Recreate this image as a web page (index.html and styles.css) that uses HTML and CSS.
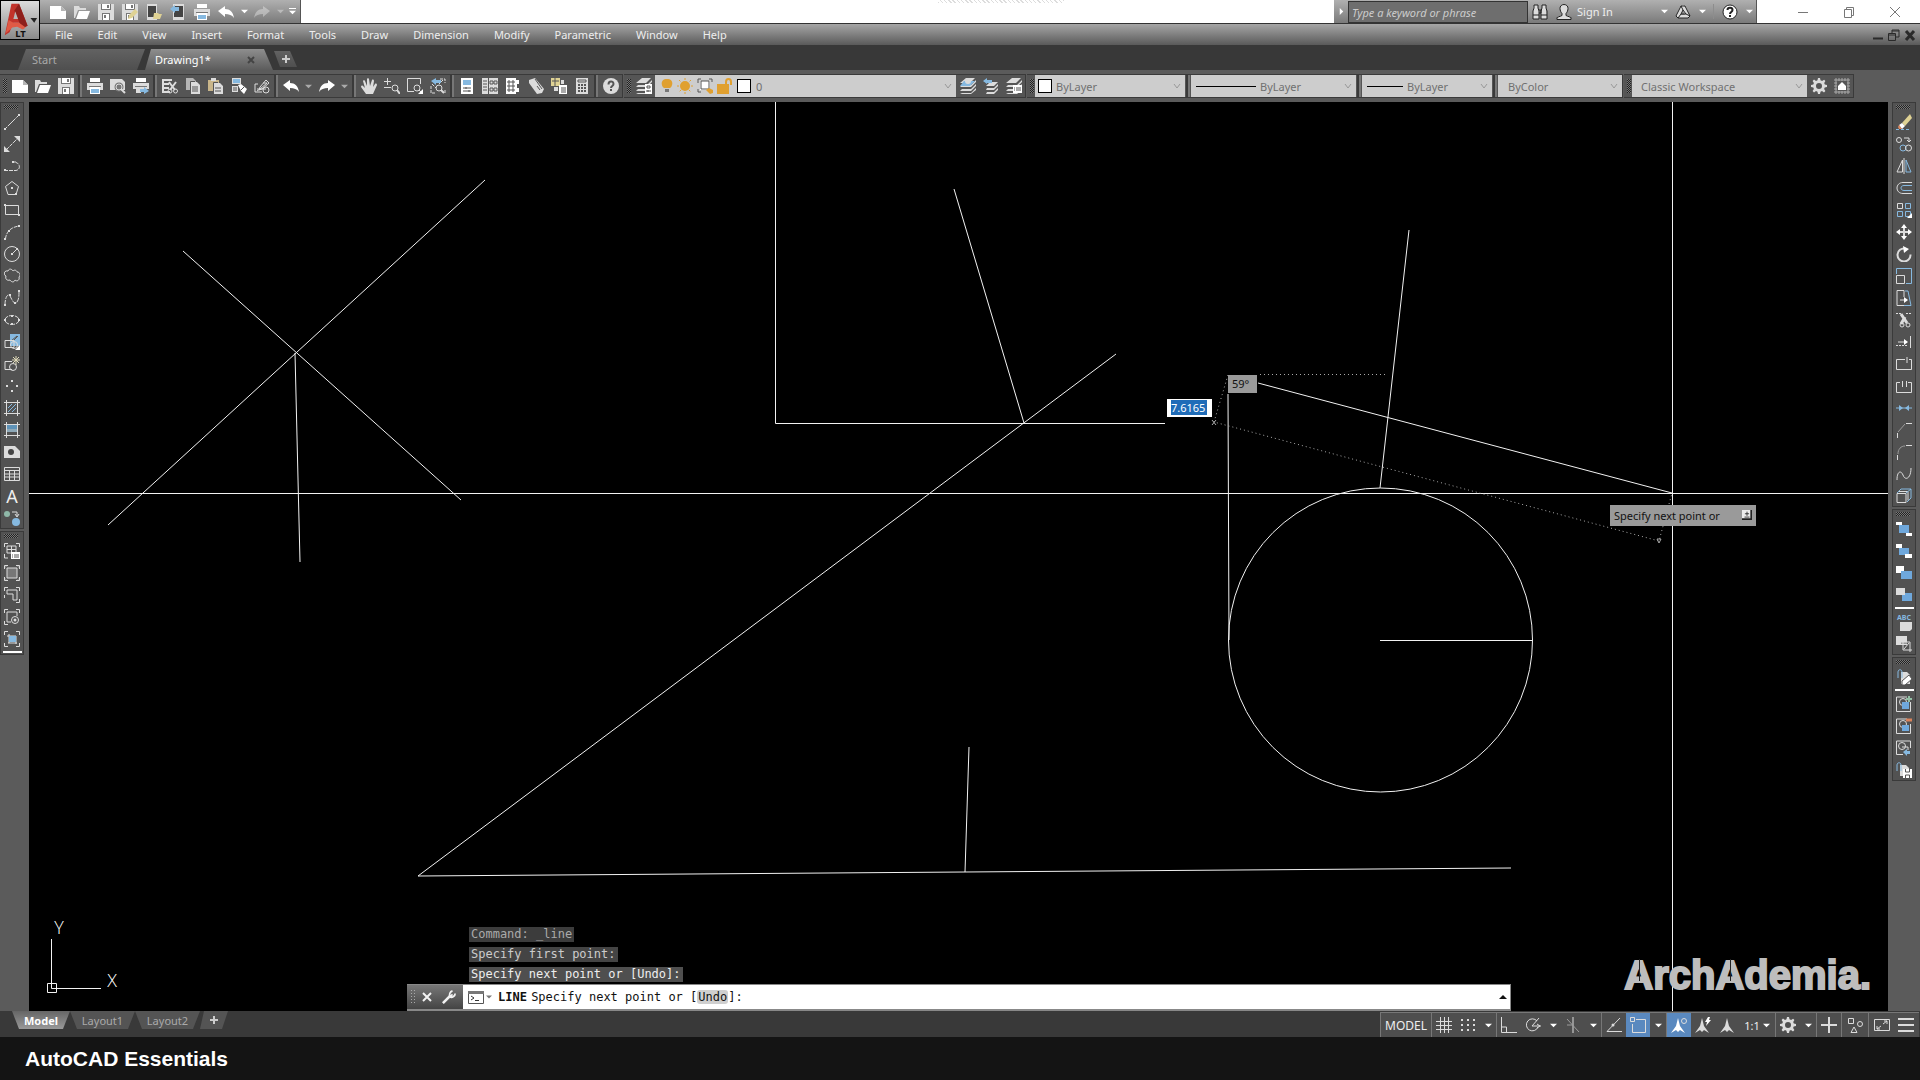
FILE: index.html
```html
<!DOCTYPE html>
<html lang="en">
<head>
<meta charset="UTF-8">
<meta name="viewport" content="width=device-width, initial-scale=1.0">
<title>AutoCAD LT - Drawing1</title>
<link rel="stylesheet" href="styles.css">
</head>
<body>

<!-- shared icons -->
<svg class="defs" aria-hidden="true">
<symbol id="new" viewBox="0 0 16 16"><path class="w" d="M0 2h11l5 5v8H0z"/><path class="g" d="M11 2v5h5z"/></symbol>
<symbol id="open" viewBox="0 0 16 16"><path class="f" d="M0 2h5l1 2h6v2H4L1 14H0z"/><path class="w" d="M5 7h11l-3 8H2z"/></symbol>
<symbol id="save" viewBox="0 0 16 16"><path class="f" d="M0 0h16v16H0z"/><path class="d" d="M3 0h10v6H3zM4 9h8v7H4z"/><path class="w" d="M4 0h8v5H4zM5 10h6v6H5z"/><path class="d" d="M9 1h2v3H9zM6 11h2v3H6z"/></symbol>
<symbol id="print" viewBox="0 0 16 16"><path class="w" d="M3 0h10v4H3z"/><path class="f" d="M0 5h16v7H0z"/><path class="d" d="M2 8h12v1H2z"/><path class="w" d="M3 9h10v7H3z"/><path class="bf" d="M4 11h8v4H4z"/></symbol>
<symbol id="undo" viewBox="0 0 16 16"><path class="w" d="M0 7l7-5v3c5 0 8 3 9 9-2-3-5-4-9-4v3z"/></symbol>
<symbol id="redo" viewBox="0 0 16 16"><path class="w" d="M16 7L9 2v3c-5 0-8 3-9 9 2-3 5-4 9-4v3z"/></symbol>
<symbol id="down" viewBox="0 0 8 8"><path class="w" d="M0 2h8L4 6z"/></symbol>
<symbol id="chev" viewBox="0 0 8 8"><path d="M1 2l3 4 3-4"/></symbol>
<symbol id="layers" viewBox="0 0 16 16"><path class="f" d="M6 0h9l-5 5H0zM2 7h9l5-5v2l-5 5H0zM2 11h9l5-5v2l-5 5H0zM2 15h9l5-5v2l-5 4H0z"/></symbol>
<symbol id="gear" viewBox="0 0 16 16"><path class="f" fill-rule="evenodd" d="M7 0h2l.5 2.300 1.600.7 2-1.300 1.300 1.400-1.200 2 .6 1.500L16 7v2l-2.300.5-.6 1.500 1.300 2-1.400 1.400-2-1.300-1.500.6L9 16H7l-.5-2.300-1.500-.6-2 1.300L1.600 13l1.300-2-.6-1.500L0 9V7l2.300-.5.6-1.500-1.300-2L3 1.600l2 1.300 1.500-.6zM8 5a3 3 0 100 6 3 3 0 000-6z"/></symbol>
</svg>

<header class="top">
  <button class="app-btn" title="Application menu">
    <svg viewBox="0 0 40 40">
      <path fill="#c2332b" d="M11 3h8l9 23-6 3-3-6h-6l-4 10-5 3z"/>
      <path fill="#8e1f1b" d="M19 3l9 23-6 3-8-19z"/>
      <path fill="#b8b8b8" d="M15 11l3 8h-5z"/>
      <path fill="#e05a45" d="M8 20l5 3h6l7 5-3 2-6-3-5 1-7 6z"/>
      <path fill="#222" d="M31 18h7l-3 5z"/>
      <text x="15" y="38">LT</text>
    </svg>
  </button>
  <div class="top-main">
    <div class="titlebar">
      <div class="qat">
        <button title="New"><svg class="ico"><use href="#new"/></svg></button>
        <button title="Open"><svg class="ico"><use href="#open"/></svg></button>
        <button title="Save"><svg class="ico"><use href="#save"/></svg></button>
        <button title="Save As"><svg class="ico" viewBox="0 0 16 16"><use href="#save"/><path class="y" d="M7 11l6-6 3 3-6 6-4 1z"/></svg></button>
        <button title="Open from Mobile"><svg class="ico" viewBox="0 0 16 16"><path class="f" d="M1 0h10v16H1z"/><path class="k" d="M2 2h8v11H2z"/><path class="y" d="M8 9h4l1 1h3l-2 5H7z"/></svg></button>
        <button title="Save to Mobile"><svg class="ico" viewBox="0 0 16 16"><path class="f" d="M3 0h11v16H3z"/><path class="k" d="M4 2h9v11H4z"/><path class="bf" d="M0 5l5-4v2h4v4H5v2z"/></svg></button>
        <button title="Plot"><svg class="ico"><use href="#print"/></svg></button>
        <button title="Undo"><svg class="ico"><use href="#undo"/></svg></button>
        <button class="drop" title="Undo list"><svg><use href="#down"/></svg></button>
        <button class="off" title="Redo"><svg class="ico"><use href="#redo"/></svg></button>
        <button class="drop off" title="Redo list"><svg><use href="#down"/></svg></button>
        <button class="drop" title="Customize"><svg viewBox="0 0 8 8"><path class="w" d="M0 0h8v1H0zM0 3h8L4 7z"/></svg></button>
      </div>
      <div class="hatch"></div>
      <div class="infocenter">
        <button class="drop" title="Collapse"><svg viewBox="0 0 8 8"><path class="w" d="M2 0l4 4-4 4z"/></svg></button>
        <input type="text" aria-label="Search" placeholder="Type a keyword or phrase">
        <button title="Search"><svg class="ico dark" viewBox="0 0 16 16"><path class="f" d="M2 1h4v3l1 3v8H1V7zM10 1h4v3l1 8v3H9V7l1-3z"/><path d="M2 1h4v3l1 3v8H1V7l1-3zM10 1h4v3l1 3v8H9V7l1-3zM7 6h2v3H7M1 11h6M9 11h6"/></svg></button>
        <button class="sign"><svg class="ico dark" viewBox="0 0 16 16"><path class="f" d="M8 0c3 0 4 2 4 4s-1 4-2 5v2l5 2v2H1v-2l5-2V9C5 8 4 6 4 4s1-4 4-4z"/><path d="M8 .5c3 0 4 2 4 4s-1 4-2 5v2l5 2v2H1v-2l5-2v-2c-1-1-2-3-2-5s1-4 4-4z"/></svg>Sign In</button>
        <button class="drop" title="Account"><svg><use href="#down"/></svg></button>
        <button title="Autodesk App Store"><svg class="ico dark" viewBox="0 0 16 16"><path class="f" fill-rule="evenodd" d="M8 1l3 2 4 9-2 2H3l-2-2 4-9zM8 6l-2 5h4z"/><path d="M6 2h4l5 10-2 2H3l-2-2zM8 6l-2 4h5zM6 2l2 4M15 12l-4-2M3 14l3-4"/></svg></button>
        <button class="drop" title="App list"><svg><use href="#down"/></svg></button>
        <span class="vsep"></span>
        <button title="Help"><svg class="ico dark" viewBox="0 0 16 16"><circle class="w" cx="8" cy="8" r="7"/><circle cx="8" cy="8" r="7"/><path d="M5.500 6c0-3 5-3 5 0 0 2-2.500 2-2.500 4M8 11v2" stroke-width="2"/></svg></button>
        <button class="drop" title="Help list"><svg><use href="#down"/></svg></button>
      </div>
      <div class="window-btns">
        <button title="Minimize"><svg viewBox="0 0 12 12"><path d="M1 6.500h10"/></svg></button>
        <button title="Restore"><svg viewBox="0 0 12 12"><path d="M1.500 3.500h7v8h-7zM3.500 3.500v-2h7v8h-2"/></svg></button>
        <button title="Close"><svg viewBox="0 0 12 12"><path d="M1 1l10 10M11 1L1 11"/></svg></button>
      </div>
    </div>
    <nav class="menubar">
      <button>File</button><button>Edit</button><button>View</button><button>Insert</button><button>Format</button><button>Tools</button><button>Draw</button><button>Dimension</button><button>Modify</button><button>Parametric</button><button>Window</button><button>Help</button>
      <div class="doc-btns">
        <button title="Minimize drawing"><svg viewBox="0 0 12 12"><path d="M1 9.500h10" stroke-width="2"/></svg></button>
        <button title="Restore drawing"><svg viewBox="0 0 12 12"><path d="M.5 4.500h7v7h-7zM.5 6h7M4 4V1h7v7H8M4 2h7"/></svg></button>
        <button title="Close drawing"><svg viewBox="0 0 12 12"><path d="M2 2l8 9M10 2l-8 9" stroke-width="3"/></svg></button>
      </div>
    </nav>
  </div>
</header>

<div class="file-tabs">
  <button class="file-tab">Start</button>
  <button class="file-tab active">Drawing1*<svg viewBox="0 0 8 8"><path d="M1 1l6 6M7 1L1 7"/></svg></button>
  <button class="file-tab plus" title="New tab"><svg viewBox="0 0 8 8"><path d="M4 0v8M0 4h8"/></svg></button>
</div>

<div class="toolstrip">
  <div class="toolbar">
    <i class="grip"></i>
    <button title="New"><svg class="ico"><use href="#new"/></svg></button>
    <button title="Open"><svg class="ico"><use href="#open"/></svg></button>
    <button title="Save"><svg class="ico"><use href="#save"/></svg></button>
    <i class="sep"></i>
    <button title="Plot"><svg class="ico"><use href="#print"/></svg></button>
    <button title="Plot Preview"><svg class="ico" viewBox="0 0 16 16"><path class="f" d="M0 1h12l3 3v8H0z"/><circle class="d" cx="9" cy="9" r="4.500"/><circle cx="9" cy="9" r="3"/><path d="M11 11l4 4" stroke-width="2"/></svg></button>
    <button title="Publish"><svg class="ico" viewBox="0 0 16 16"><path class="w" d="M3 0h10v4H3z"/><path class="f" d="M0 5h16v6H0zM3 11h5v4H3z"/><path class="d" d="M2 8h12v1H2z"/><path class="bf" d="M7 11h4V9l5 4-5 3v-2H7z"/></svg></button>
    <i class="sep"></i>
    <button title="Cut"><svg class="ico" viewBox="0 0 16 16"><path class="f" d="M0 1h10v2H0zM0 5h7v2H0zM0 9h7v2H0zM0 13h8v2H0z"/><path d="M1 1v14M7 4l6 8M14 4l-6 8" stroke-width="2"/><circle cx="8" cy="13" r="2"/><circle cx="13.500" cy="13" r="2"/></svg></button>
    <button title="Copy"><svg class="ico" viewBox="0 0 16 16"><path class="g" d="M1 0h7l3 3v9H1z"/><path class="f" d="M6 4h6l3 3v9H6z"/><path class="ds" d="M5.500 16V3.500H10M7 9h6M7 11h6M7 13h6"/></svg></button>
    <button title="Paste"><svg class="ico" viewBox="0 0 16 16"><path class="t" d="M0 2h11v11H0z"/><path class="f" d="M3 0h5v3H3zM6 5h6l3 3v8H6z"/><path class="ds" d="M5.500 16V4.500H10M7 10h6M7 13h6"/></svg></button>
    <button title="Match Properties"><svg class="ico" viewBox="0 0 16 16"><path class="f" d="M1 0h9v6H1zM1 8h6v6H1z"/><path class="bf" d="M2 1h7v4H2z"/><path class="w" d="M7 7l3-1 6 5-3 5-3-3z"/><path class="ds" d="M2 10h4M2 12h4M10 12l3-3"/></svg></button>
    <button title="Block Editor"><svg class="ico" viewBox="0 0 16 16"><path d="M4 6H1v8h7M9 5h4l-7 6-3 2M12 2l3 3-7 6-3 1 1-3zM3 11h9"/><circle cx="12" cy="12" r="3"/></svg></button>
    <i class="sep"></i>
    <button title="Undo"><svg class="ico"><use href="#undo"/></svg></button>
    <button class="drop" title="Undo list"><svg><use href="#down"/></svg></button>
    <button title="Redo"><svg class="ico"><use href="#redo"/></svg></button>
    <button class="drop" title="Redo list"><svg><use href="#down"/></svg></button>
    <i class="sep"></i>
    <button title="Pan"><svg class="ico" viewBox="0 0 16 16"><path class="f" d="M5 16L0 9c0-1 1-2 2-1l2 2L2 3c0-1 2-1 2 0l2 5V1c0-1 2-1 2 0l1 7 2-6c1-1 2 0 2 1l-1 6 2-3c1-1 2 0 2 1l-4 9z"/></svg></button>
    <button title="Zoom Realtime"><svg class="ico" viewBox="0 0 16 16"><path d="M0 3.500h7M3.500 0v7M0 9.500h7"/><circle cx="11" cy="10" r="3"/><path d="M13 12l3 4" stroke-width="2"/></svg></button>
    <button title="Zoom Window"><svg class="ico" viewBox="0 0 16 16"><path d="M7 13.500H.5v-13h13V6"/><circle cx="10" cy="10" r="3"/><path d="M12 12l2 2"/><path class="w" d="M16 11v5h-5z"/></svg></button>
    <button title="Zoom Previous"><svg class="ico" viewBox="0 0 16 16"><path d="M1 8v7h4M10 1h5v4M15 12v3M2 6l4 4M13 2l-4 4" stroke-dasharray="3 1"/><path class="bf" d="M1 3l5-3v2h5v3H6v2z"/><circle cx="9" cy="10" r="3"/><path d="M11 12l3 3" stroke-width="2"/></svg></button>
    <i class="sep"></i>
    <button title="Properties"><svg class="ico" viewBox="0 0 16 16"><path class="w" d="M2 0h12v16H2z"/><path class="bf" d="M4 2h8v5H4z"/><path class="ds" d="M4 10h8M4 13h8M7 9v2M10 12v2"/></svg></button>
    <button title="DesignCenter"><svg class="ico" viewBox="0 0 16 16"><path class="f" d="M0 0h16v16H0z"/><path class="ds" d="M1 3h4M1 6h4M1 9h4M1 12h4M6.500 0v16M8 3h3v3H8zM12 3h3v3h-3zM8 10h3v3H8zM12 10h3v3h-3z"/></svg></button>
    <button title="Tool Palettes"><svg class="ico" viewBox="0 0 16 16"><path class="w" d="M1 0h10v2h3v4h-2v4h2v4h-3v2H1z"/><path class="ds" d="M3 3h2v2H3zM3 7h2v2H3zM3 11h2v2H3zM7 3h2v2H7zM7 7h2v2H7zM7 11h2v2H7z"/></svg></button>
    <button title="Sheet Set Manager"><svg class="ico" viewBox="0 0 16 16"><path class="f" d="M1 2l6-2 9 11-2 4-5 1-8-11z"/><path class="ds" d="M7 1l7 10M9 8l3 4"/></svg></button>
    <button title="Markup Set Manager"><svg class="ico" viewBox="0 0 16 16"><path class="y" d="M0 0h9v8H0z"/><path class="w" d="M8 7h8v9H8z"/><path class="f" d="M3 9h4v4H3zM10 2h3v4h-3z"/><path class="ds" d="M1 3h7M4 0v8M10 10h5M10 12h5M10 14h5"/></svg></button>
    <button title="QuickCalc"><svg class="ico" viewBox="0 0 16 16"><path class="f" d="M2 0h12v16H2z"/><path class="ds" d="M4 2h8v2H4z"/><path class="ds" stroke-width="2" stroke-dasharray="2 1" d="M4 7h8M4 10h8M4 13h8"/></svg></button>
    <i class="sep"></i>
    <button title="Help"><svg class="ico" viewBox="0 0 16 16"><circle class="f" cx="8" cy="8" r="8"/><path class="ds" stroke-width="2" d="M5.500 6.500c0-4 5-4 5-.5 0 2-2.500 2-2.500 4M8 11v2"/></svg></button>
  </div>

  <div class="toolbar">
    <i class="grip"></i>
    <button title="Layer Properties"><svg class="ico" viewBox="0 0 16 16"><use href="#layers"/><path class="w" d="M9 6h7v10H9z"/><path class="ds" d="M11 8h3v2h-3zM10 13h5M12 12v2"/></svg></button>
    <label class="combo layer">
      <svg viewBox="0 0 12 16"><path class="o" d="M6 1c7 0 6 7 3 9H3C0 8-1 1 6 1z"/><path class="d" d="M4 11h4v3H4z"/></svg>
      <svg class="ico" viewBox="0 0 16 16"><circle class="o" cx="8" cy="8" r="5"/><path class="os" d="M8 0v16M0 8h16M2 2l12 12M14 2L2 14" stroke-dasharray="2 12 2"/></svg>
      <svg class="ico" viewBox="0 0 16 16"><path class="w" d="M3 3h10v9H3z"/><path class="ds" d="M4 3h8v8H4zM1 5V1h3M12 1h3v3M1 11v3h3"/><path class="o" d="M9 12l3-2 4 2v3l-3 1z"/></svg>
      <svg class="ico" viewBox="0 0 16 16"><path class="o" d="M0 6h12v10H0z"/><path class="os" d="M9 6V4c0-4 5-4 5 0v3" stroke-width="2"/></svg>
      <i class="swatch"></i>
      <select aria-label="Layer"><option>0</option></select>
      <svg class="chev"><use href="#chev"/></svg>
    </label>
    <button title="Make Object's Layer Current"><svg class="ico" viewBox="0 0 16 16"><use href="#layers"/><path class="bf" d="M4 3h11l-5 5H0z"/><circle class="f" cx="8" cy="3" r="3"/></svg></button>
    <button title="Layer Previous"><svg class="ico" viewBox="0 0 16 16"><path class="f" d="M7 4h8l-4 4H3zM4 10h7l4-4v2l-4 4H3zM4 14h7l4-4v2l-4 4H3z"/><path class="bf" d="M0 3l4-3v2h5v3H4v1z"/></svg></button>
    <button title="Layer States Manager"><svg class="ico" viewBox="0 0 16 16"><use href="#layers"/><path class="w" d="M7 7h9v8H7z"/><path class="ds" d="M8 10h1M10 10h5M8 12h1M10 12h5"/></svg></button>
  </div>

  <div class="toolbar">
    <i class="grip"></i>
    <label class="combo color"><i class="swatch"></i><select aria-label="Color"><option>ByLayer</option></select><svg class="chev"><use href="#chev"/></svg></label>
    <i class="sep"></i>
    <label class="combo ltype"><i class="rule"></i><select aria-label="Linetype"><option>ByLayer</option></select><svg class="chev"><use href="#chev"/></svg></label>
    <i class="sep"></i>
    <label class="combo lweight"><i class="rule"></i><select aria-label="Lineweight"><option>ByLayer</option></select><svg class="chev"><use href="#chev"/></svg></label>
    <i class="sep"></i>
    <label class="combo pstyle"><select aria-label="Plot style"><option>ByColor</option></select><svg class="chev"><use href="#chev"/></svg></label>
  </div>

  <div class="toolbar">
    <i class="grip"></i>
    <label class="combo wspace"><select aria-label="Workspace"><option>Classic Workspace</option></select><svg class="chev"><use href="#chev"/></svg></label>
    <button title="Workspace Settings"><svg class="ico"><use href="#gear"/></svg></button>
    <button title="My Workspace"><svg class="ico" viewBox="0 0 16 16"><path d="M2 0v16M14 0v16M0 2h16M0 14h16M5 0v3M8 0v3M11 0v3M5 13v3M8 13v3M11 13v3M0 5h3M0 8h3M0 11h3M13 5h3M13 8h3M13 11h3" stroke="#aaa"/><path class="w" d="M4 8l4-4 4 4v4H4z"/></svg></button>
  </div>
</div>

<main class="work">
  <aside class="side left">
    <div class="palette">
      <i class="grip"></i>
      <button title="Line"><svg class="ico" viewBox="0 0 16 16"><path d="M1 15L15 1" stroke-dasharray="3 1 11 1"/><path class="f" d="M0 14h2v2H0zM14 0h2v2h-2z"/></svg></button>
      <button title="Construction Line"><svg class="ico" viewBox="0 0 16 16"><path d="M2 14L14 2" stroke-dasharray="4 1"/><path class="f" d="M0 16v-6l6 6zM16 0v6l-6-6z"/></svg></button>
      <button title="Polyline"><svg class="ico" viewBox="0 0 16 16"><path d="M0 12.500h12c5-1 4-7 0-8M9 4h3" stroke-dasharray="4 1"/><path class="f" d="M0 11h2v2H0zM8 3h2v2H8z"/></svg></button>
      <button title="Polygon"><svg class="ico" viewBox="0 0 16 16"><path d="M8 1.500l6.500 5-2.500 8H4l-2.500-8z"/><path class="f" d="M7 7h2v2H7zM11 13h2v2h-2z"/></svg></button>
      <button title="Rectangle"><svg class="ico" viewBox="0 0 16 16"><path d="M1 3.500h13.500v9H1.500v-9"/><path class="f" d="M0 2h2v2H0zM14 12h2v2h-2z"/></svg></button>
      <button title="Arc"><svg class="ico" viewBox="0 0 16 16"><path d="M1.500 15C2 8 7 3 15 2" stroke-dasharray="4 1"/><path class="f" d="M0 14h2v2H0zM14 1h2v2h-2zM4 6h2v2H4z"/></svg></button>
      <button title="Circle"><svg class="ico" viewBox="0 0 16 16"><circle cx="8" cy="8" r="7.500"/><path d="M9 7l4-4"/><path class="f" d="M7 7h2v2H7zM12 2h2v2h-2z"/></svg></button>
      <button title="Revision Cloud"><svg class="ico" viewBox="0 0 16 16"><path d="M2 8C-1 7 0 2 4 3c1-3 4-2 5 0 2-2 4 0 4 1 3 0 4 3 2 5 1 3-2 5-4 3-1 3-4 2-5 0-3 1-5-1-4-4z"/></svg></button>
      <button title="Spline"><svg class="ico" viewBox="0 0 16 16"><path d="M1 15c0-8 3-12 5-9 2 4 5 10 7 6 2-3 2-6 2-11" stroke-dasharray="5 1"/><path class="f" d="M0 14h2v2H0zM14 0h2v2h-2zM5 4h2v2H5zM10 12h2v2h-2z"/></svg></button>
      <button title="Ellipse"><svg class="ico" viewBox="0 0 16 16"><ellipse cx="8" cy="8" rx="7" ry="4.500" stroke-dasharray="5 1"/><path class="f" d="M0 7h2v2H0zM14 7h2v2h-2zM7 3h2v2H7zM7 11h2v2H7z"/></svg></button>
      <button title="Insert Block"><svg class="ico" viewBox="0 0 16 16"><path class="bf" d="M6 0h10v12H6z"/><path class="ds" d="M7 7l6-5M9 7l5-5"/><path d="M1 6.500h9v7H1z"/><circle cx="10" cy="11" r="3.500"/><path class="w" d="M16 11v5h-5z"/></svg></button>
      <button title="Make Block"><svg class="ico" viewBox="0 0 16 16"><path d="M8 5.500H1v8h7"/><circle cx="9" cy="11" r="3.500"/><path class="ys" d="M12 0v9M8 4h8M9 1l6 6M15 1L9 7"/></svg></button>
      <button title="Point"><svg class="ico" viewBox="0 0 16 16"><path class="f" d="M7 2h2v2H7zM2 7h2v2H2zM12 7h2v2h-2zM7 12h2v2H7z"/></svg></button>
      <button title="Hatch"><svg class="ico" viewBox="0 0 16 16"><path d="M2.500 0v16M13.500 0v16M0 2.500h16M0 13.500h16"/><path class="bs" d="M4 8l4-4M4 12l8-8M8 12l4-4"/></svg></button>
      <button title="Gradient"><svg class="ico" viewBox="0 0 16 16"><path fill="#5f93b8" stroke="none" d="M3 3h10v4H3z"/><path fill="#8ea9b8" stroke="none" d="M3 7h10v3H3z"/><path d="M2.500 0v16M13.500 0v16M0 2.500h16M0 13.500h16"/></svg></button>
      <button title="Region"><svg class="ico" viewBox="0 0 16 16"><path class="f" d="M0 2h11l5 5v7H0z"/><circle class="k" cx="7" cy="8" r="3"/></svg></button>
      <button title="Table"><svg class="ico" viewBox="0 0 16 16"><path d="M.5 1.500h15v13H.5zM0 4.500h16M0 8h16M0 11h16M5.500 4v10M10.500 4v10"/></svg></button>
      <button class="mtext" title="Multiline Text">A</button>
      <button title="Add Selected"><svg class="ico" viewBox="0 0 16 16"><circle cx="3" cy="4" r="3" fill="#8fb8a8" stroke="none"/><circle class="bf" cx="12" cy="12" r="4"/><path d="M8 2h5v4M11 4l2 3 2-3"/></svg></button>
    </div>
    <div class="palette">
      <i class="grip"></i>
      <button title="Viewports Dialog"><svg class="ico" viewBox="0 0 16 16"><path d="M.5 4V.5H4M12 .5h3.500V4M.5 11v4H4M3 3h9v7H3zM3 6.500h9M7.500 3v7"/><path class="w" d="M7 9h9v7H7z"/><path class="ds" d="M8 12h1M10 12h5M8 14h1M10 14h5"/></svg></button>
      <button title="Single Viewport"><svg class="ico" viewBox="0 0 16 16"><path fill="#777" d="M.5 4V.5H4M12 .5h3.500V4M.5 12v3.500H4M12 15.500h3.500V12M3 3h10v10H3z"/></svg></button>
      <button title="Polygonal Viewport"><svg class="ico" viewBox="0 0 16 16"><path d="M.5 4V.5H4M12 .5h3.500V4M.5 8v3M12 15.500h3.500V12M3 3h10v10H9V7H3z"/></svg></button>
      <button title="Object to Viewport"><svg class="ico" viewBox="0 0 16 16"><path d="M.5 4V.5H4M12 .5h3.500V4M.5 12v3.500H4M7 13H3V3h10v4"/><circle cx="11" cy="11" r="3.500"/><circle class="f" cx="11" cy="11" r="1.500"/></svg></button>
      <button title="Clip Viewport"><svg class="ico" viewBox="0 0 16 16"><path d="M.5 4V.5H4M12 .5h3.500V4M.5 12v3.500H4M12 15.500h3.500V12M5 3v9M12 5v8M3 5h9M4 12h9"/><path class="bf" d="M5 5h7v6H5z"/></svg></button>
      <i class="line"></i>
    </div>
  </aside>

  <section class="canvas">
    <svg class="scene" viewBox="29 102 1859 909" preserveAspectRatio="xMinYMin meet">
      <!-- drawn geometry -->
      <path d="M183 251L461 500M485 180L108 525M295 353L300 562"/>
      <path d="M775.500 102V423.500H1165M954 189L1024 423"/>
      <path d="M1116 354L418 876L1511 868M969 747L965 872"/>
      <path d="M1409 230L1380 488M1228 394L1229 640M1380 640.500H1532"/>
      <circle cx="1380.500" cy="640" r="152"/>
      <!-- crosshair and rubber band -->
      <path d="M29 493.500H1888M1672.500 102V1011M1258 383L1672 493"/>
      <path class="dots" d="M1260 374.500H1386M1228 375L1214 422L1659 541L1672 493"/>
      <path class="dim" d="M1212 420l4 5M1216 420l-4 5M1657 539l4 0l-2 4z"/>
      <!-- ucs icon -->
      <path d="M47.500 983.500h9v9h-9zM51.500 939V988.500H101"/>
      <text x="59" y="934">Y</text>
      <text x="112" y="987">X</text>
    </svg>

    <output class="tip angle">59°</output>
    <label class="length"><input type="text" aria-label="Length" value="7.6165"></label>
    <div class="tip prompt">Specify next point or<svg viewBox="0 0 12 12"><path fill="#eee" d="M0 0h12v12H0z"/><path stroke="#222" stroke-width="2" d="M11 0v12M0 11h12"/><path stroke="#222" d="M6 2v5M3.500 4.500h5M3 8.500h6"/></svg></div>
    <div class="watermark"><span>A</span>rch<span>A</span>demia.</div>

    <div class="command">
      <p class="old">Command: _line</p>
      <p class="mid">Specify first point:</p>
      <p>Specify next point or [Undo]:</p>
      <div class="cmd-bar">
        <div class="cmd-tools">
          <i class="grip"></i>
          <button title="Close"><svg viewBox="0 0 12 12"><path d="M2 2l8 8M10 2l-8 8" stroke-width="2"/></svg></button>
          <button title="Customize"><svg viewBox="0 0 16 16"><path d="M1 15l8-8" stroke-width="3"/><path d="M9 8c-1-3 0-6 3-7M9 8c3 1 6-1 6-4M9 8l3-3" stroke-width="2"/></svg></button>
        </div>
        <button class="recent" title="Recent commands"><svg viewBox="0 0 16 13"><path stroke="#555" fill="#fff" d="M.5.5h15v12H.5z"/><path fill="#777" d="M0 0h16v3H0z"/><path stroke="#333" d="M3 5l3 2-3 2M7 9.500h4"/></svg><svg class="small" viewBox="0 0 8 8"><path fill="#777" d="M0 2h8L4 6z"/></svg></button>
        <div class="cmd-text"><b>LINE</b> Specify next point or [<button>Undo</button>]:</div>
        <button class="expand" title="Command history"><svg viewBox="0 0 8 8"><path fill="#111" d="M0 6h8L4 2z"/></svg></button>
      </div>
    </div>
  </section>

  <aside class="side right">
    <div class="palette">
      <i class="grip"></i>
      <button title="Erase"><svg class="ico" viewBox="0 0 16 16"><path class="y" d="M6 9L14 0l2 4-7 8z"/><path class="w" d="M3 11l3-2 3 3-3 3z"/><path fill="#e0895f" stroke="none" d="M3 11l3 4H3l-1-2z"/><path class="bs" d="M0 15.500h14" stroke-dasharray="3 2"/></svg></button>
      <button title="Copy"><svg class="ico" viewBox="0 0 16 16"><circle cx="3" cy="4" r="2.500"/><circle class="bs" cx="7" cy="12" r="3"/><circle cx="12.500" cy="12" r="3"/><path d="M8 2h5v4M11 4l2 2 2-2"/></svg></button>
      <button title="Mirror"><svg class="ico" viewBox="0 0 16 16"><path d="M6.500 2v12H1zM8 0v16"/><path class="bs" d="M10 2v12h5z"/></svg></button>
      <button title="Offset"><svg class="ico" viewBox="0 0 16 16"><path class="bs" d="M16 5.500H8c-4 0-4 5 0 5h8"/><path d="M16 2.500H7c-8 0-8 11 0 11h9"/></svg></button>
      <button title="Array"><svg class="ico" viewBox="0 0 16 16"><path d="M1.500 1.500h5v5h-5z"/><path class="bs" d="M9.500 1.500h5v5h-5zM1.500 9.500h5v5h-5zM9.500 9.500h5v5h-5z"/><path class="w" d="M16 11v5h-5z"/></svg></button>
      <button title="Move"><svg class="ico" viewBox="0 0 16 16"><path d="M8 2v12M2 8h12" stroke-width="2"/><path class="w" d="M8 0l3 4H5zM8 16l3-4H5zM0 8l4-3v6zM16 8l-4-3v6z"/></svg></button>
      <button title="Rotate"><svg class="ico" viewBox="0 0 16 16"><path d="M9 2.500a6.500 6.500 0 105.500 6" stroke-width="2"/><path class="w" d="M7 0l6 3-5 4z"/></svg></button>
      <button title="Scale"><svg class="ico" viewBox="0 0 16 16"><path class="bs" d="M.5 6V.5h15v15H10"/><path d="M.5 7.500h8v8h-8z"/></svg></button>
      <button title="Stretch"><svg class="ico" viewBox="0 0 16 16"><path class="bs" d="M9 1l3 0 3 14.500H8"/><path d="M8 7V.5H1v15h7M4 10h6" /><path class="w" d="M8 7l4 3-4 3z"/></svg></button>
      <button title="Trim"><svg class="ico" viewBox="0 0 16 16"><path d="M0 1.500h5M10 1.500h6" stroke-dasharray="2 1"/><path d="M5 2l6 9M9 5l-4 7" stroke-width="3"/><circle cx="12" cy="13" r="2"/><circle cx="6" cy="13" r="2"/></svg></button>
      <button title="Extend"><svg class="ico" viewBox="0 0 16 16"><path d="M14.500 2v12M2 8h8"/><path class="w" d="M8 5l4 3-4 3z"/><path d="M0 11.500h12" stroke-dasharray="2 1"/></svg></button>
      <button title="Break at Point"><svg class="ico" viewBox="0 0 16 16"><path d="M9 3.500H.5v10h15v-10H13M11 1v6"/></svg></button>
      <button title="Break"><svg class="ico" viewBox="0 0 16 16"><path d="M4 4.500H.5v10h15v-10H12M6.500 3v6M10.500 3v6"/></svg></button>
      <button title="Join"><svg class="ico" viewBox="0 0 16 16"><path class="bs" d="M0 8h16"/><path class="bf" d="M3 5l4 3-4 3zM13 5L9 8l4 3z"/></svg></button>
      <button title="Chamfer"><svg class="ico" viewBox="0 0 16 16"><path d="M1.500 16v-5M10 1.500h6"/><path class="gs" d="M2 10l7-8"/></svg></button>
      <button title="Fillet"><svg class="ico" viewBox="0 0 16 16"><path d="M1.500 16v-5M10 1.500h6"/><path class="gs" d="M2 10c0-5 3-8 7-8"/></svg></button>
      <button title="Blend Curves"><svg class="ico" viewBox="0 0 16 16"><path d="M1 14c0-9 4-10 6-5 2 6 8 4 8-7"/></svg></button>
      <button title="Explode"><svg class="ico" viewBox="0 0 16 16"><path d="M1 5.500h9v9H1z"/><path d="M3 3.500h9v9"/><path class="bs" d="M1 5l4-4h10v9l-4 4M10 5l5-4"/></svg></button>
    </div>
    <div class="palette">
      <i class="grip"></i>
      <button title="Bring to Front"><svg class="ico" viewBox="0 0 16 16"><path class="w" d="M0 1h6v3H0zM10 12h6v3h-6z"/><path class="b2" d="M3 4h10v8H3z"/></svg></button>
      <button title="Send to Back"><svg class="ico" viewBox="0 0 16 16"><path class="b2" d="M3 5h10v7H3z"/><path class="w" d="M0 1h6v4H0zM9 11h7v4H9z"/></svg></button>
      <button title="Bring Above"><svg class="ico" viewBox="0 0 16 16"><path class="w" d="M0 1h8v7H0z"/><path class="b2" d="M5 6h11v8H5z"/></svg></button>
      <button title="Send Under"><svg class="ico" viewBox="0 0 16 16"><path class="b2" d="M6 6h10v8H6z"/><path class="f" d="M0 1h9v7H0z"/></svg></button>
      <i class="line"></i>
      <button class="abc" title="Text to Front"><span>ABC</span><svg viewBox="0 0 12 9"><path class="f" d="M0 0h12v7l-2 2H0z"/></svg></button>
      <button title="Hatch to Back"><svg class="ico" viewBox="0 0 16 16"><path class="f" d="M0 0h11v9H0z"/><path class="ds" d="M5 7h11v8"/><path d="M7 4v10h9M14 16V6H5M8 13l5-6"/></svg></button>
    </div>
    <div class="palette">
      <i class="grip"></i>
      <button title="Edit Reference"><svg class="ico" viewBox="0 0 16 16"><path class="f" d="M5 3h6l3 3v9H5z"/><path class="bs" d="M2 9V3c0-3 4-3 4 0v6"/><path class="ds" d="M6 12l7-6 3 4-7 6H6z" fill="#fff"/></svg></button>
      <i class="line"></i>
      <button title="Add to Working Set"><svg class="ico" viewBox="0 0 16 16"><path d="M11 1H.5v14.500h14V6"/><circle cx="7" cy="6" r="3.500"/><path class="b2" d="M6 6h7v7H6z"/><path d="M13 0v6M10 3h6" stroke="#93bfa5" stroke-width="2"/></svg></button>
      <button title="Remove from Working Set"><svg class="ico" viewBox="0 0 16 16"><path d="M11 1H.5v14.500h14V6"/><circle cx="7" cy="6" r="3.500"/><path class="b2" d="M6 7h7v6H6z"/><path d="M10 2h6" stroke="#d9825b" stroke-width="3"/></svg></button>
      <button title="Discard Changes"><svg class="ico" viewBox="0 0 16 16"><path d="M7 14.500H.5V1h14v7"/><circle cx="6" cy="6" r="3.500"/><path d="M6 7h6v3"/><path class="bf" d="M7 12l4-3v2h3v3h-3v2z"/></svg></button>
      <button title="Save Reference Edits"><svg class="ico" viewBox="0 0 16 16"><path class="f" d="M4 3h6l3 3v8H4z"/><path class="bs" d="M1 9V3c0-3 4-3 4 0v6"/><path class="w" d="M7 7h9v9H7z"/><path class="ds" d="M9.500 7v3h4V7M9.500 16v-3h4v3"/></svg></button>
    </div>
  </aside>
</main>

<div class="statusbar">
  <div class="layout-tabs">
    <button class="active">Model</button>
    <button>Layout1</button>
    <button>Layout2</button>
    <button class="plus" title="New layout"><svg viewBox="0 0 8 8"><path d="M4 0v8M0 4h8"/></svg></button>
  </div>
  <div class="status">
    <div class="group"><button class="model">MODEL</button></div>
    <div class="group">
      <button title="Grid"><svg class="ico" viewBox="0 0 16 16"><path d="M4.500 0v16M8.500 0v16M12.500 0v16M0 4.500h16M0 8.500h16M0 12.500h16"/></svg></button>
      <button title="Snap"><svg class="ico" viewBox="0 0 16 16"><path d="M1 3h14M1 8h14M1 13h14" stroke-width="2" stroke-dasharray="2 4"/></svg></button>
      <button class="drop" title="Snap list"><svg><use href="#down"/></svg></button>
    </div>
    <div class="group">
      <button title="Ortho"><svg class="ico" viewBox="0 0 16 16"><path d="M.5 0v15.500H16M.5 10h5v5"/></svg></button>
      <button title="Polar Tracking"><svg class="ico" viewBox="0 0 16 16"><path d="M12 4a6 6 0 101 6M7 9h9M7 9l7-8M12 7l3 2-3 2"/></svg></button>
      <button class="drop" title="Polar list"><svg><use href="#down"/></svg></button>
      <button title="Isometric Drafting"><svg class="ico" viewBox="0 0 16 16"><path d="M8 0v16"/><path class="gs" d="M2 2l12 13M2 8h6"/></svg></button>
      <button class="drop" title="Isoplane list"><svg><use href="#down"/></svg></button>
    </div>
    <div class="group">
      <button title="Object Snap Tracking"><svg class="ico" viewBox="0 0 16 16"><path d="M14 1L1 14.500h15"/><circle class="f" cx="7" cy="8" r="1.500"/></svg></button>
      <button class="on" title="Object Snap"><svg class="ico" viewBox="0 0 16 16"><path d="M6 2.500h9.500v13h-13V7"/><path d="M.5.5h4v4h-4z"/></svg></button>
      <button class="drop" title="Snap modes"><svg><use href="#down"/></svg></button>
    </div>
    <div class="group">
      <button class="on" title="Annotation Visibility"><svg class="ico" viewBox="0 0 16 16"><path class="w" d="M7 1l2 8 5 7-5-3-2 2-2-2-5 3 5-7z"/><circle cx="13" cy="4" r="2.500"/></svg></button>
      <button title="AutoScale"><svg class="ico" viewBox="0 0 16 16"><path class="f" d="M7 1l2 8 5 7-5-3-2 2-2-2-5 3 5-7z"/><path class="w" d="M13 0l-3 5h2l-1 4 5-6h-2l1-3z"/></svg></button>
      <button title="Annotation Scale"><svg class="ico" viewBox="0 0 16 16"><path class="f" d="M8 1l2 8 5 7-5-3-2 2-2-2-5 3 5-7z"/></svg></button>
      <button class="scale">1:1<svg><use href="#down"/></svg></button>
    </div>
    <div class="group">
      <button title="Workspace Switching"><svg class="ico"><use href="#gear"/></svg></button>
      <button class="drop" title="Workspace list"><svg><use href="#down"/></svg></button>
    </div>
    <div class="group"><button title="Annotation Monitor"><svg class="ico" viewBox="0 0 16 16"><path d="M8 0v16M0 8h16" stroke-width="2"/></svg></button></div>
    <div class="group"><button title="Isolate Objects"><svg class="ico" viewBox="0 0 16 16"><path d="M1.500 1.500h5v5h-5zM7 10l3 5.500H4z"/><circle cx="13" cy="7" r="2.500"/></svg></button></div>
    <div class="group">
      <button title="Clean Screen"><svg class="ico" viewBox="0 0 16 16"><path d="M.5 2.500h15v11H.5zM9 7l4-3M10 4h3v3M7 9l-4 3M3 9v3h3"/></svg></button>
      <button title="Customization"><svg class="ico" viewBox="0 0 16 16"><path d="M0 2h16M0 8h16M0 14h16" stroke-width="2"/></svg></button>
    </div>
  </div>
</div>

<footer class="caption">AutoCAD Essentials</footer>

</body>
</html>
```
FILE: styles.css
```css
*{
    box-sizing:border-box;
}

body{
    margin:0;
    height:100vh;
    display:flex;
    flex-direction:column;
    overflow:hidden;
    background:#5b5b5b;
    color:#eee;
    font:11px "Noto Sans","Open Sans",sans-serif;
}

button,input,select{
    margin:0;
    padding:0;
    border:0;
    background:none;
    color:inherit;
    font:inherit;
}

button{
    display:flex;
    align-items:center;
    justify-content:center;
}

p{
    margin:0;
}

/* icon colours */
svg{
    fill:none;
    stroke:none;
    flex:none;
}

.defs{
    position:absolute;
    width:0;
    height:0;
}

.ico{
    width:16px;
    height:16px;
    stroke:#dcdcdc;
}

.ico.dark{
    stroke:#222;
}

.f,.w,.g,.d,.k,.bf,.b2,.y,.t,.o{
    stroke:none;
}

.f{fill:#dcdcdc;}
.w{fill:#fff;}
.g{fill:#b5b5b5;}
.d{fill:#777;}
.k{fill:#444;}
.bf{fill:#86b9e0;}
.b2{fill:#6fa8dc;}
.y{fill:#dfd294;}
.t{fill:#c9b68a;}
.o{fill:#e0a030;}
.ds{stroke:#555;}
.bs{stroke:#86b9e0;}
.gs{stroke:#9c9c9c;}
.ys{stroke:#dfd9b8;}
.os{stroke:#e0a030;}

.drop{
    width:13px;
}

.drop svg,.scale svg{
    width:7px;
    height:7px;
}

.off{
    opacity:.35;
}

/* title and menu */
.top{
    display:flex;
    height:45px;
    background:#555;
}

.app-btn{
    width:40px;
    height:40px;
    border:1px solid #000;
    background:linear-gradient(#dcdcdc,#8a8a8a);
}

.app-btn svg{
    width:38px;
    height:38px;
}

.app-btn text{
    font:bold 10px "Noto Sans",sans-serif;
    fill:#111;
}

.top-main{
    flex:1;
    display:flex;
    flex-direction:column;
}

.titlebar{
    display:flex;
    height:24px;
    background:#fff;
    border-bottom:1px solid #333;
}

.qat,.infocenter{
    display:flex;
    align-items:stretch;
    background:linear-gradient(#b0b0b0,#7a7a7a);
    border-right:1px solid #555;
}

.qat{
    padding:0 2px 0 6px;
}

.qat button{
    width:24px;
}

.qat .drop{
    width:12px;
}

.hatch{
    width:126px;
    height:3px;
    margin-left:637px;
    background:repeating-linear-gradient(45deg,#ddd 0 1px,#fff 1px 3px);
}

.infocenter{
    margin-left:auto;
    width:423px;
}

.infocenter button{
    width:24px;
}

.infocenter .drop{
    width:14px;
}

.infocenter input{
    width:180px;
    margin:1px 0 0;
    padding:0 3px;
    border:1px solid #333;
    background:#6e6e6e;
    font-style:italic;
}

.infocenter input::placeholder{
    color:#ccc;
}

.infocenter .sign{
    flex:1;
    justify-content:flex-start;
    gap:5px;
    padding-left:4px;
}

.vsep{
    width:1px;
    margin:4px 4px;
    background:#8d8d8d;
}

.window-btns{
    display:flex;
    width:163px;
    padding-left:23px;
}

.window-btns button{
    width:46px;
}

.window-btns svg,.doc-btns svg{
    width:12px;
    height:12px;
    stroke:#777;
}

.menubar{
    display:flex;
    height:21px;
    padding-left:3px;
    background:linear-gradient(#a6a6a6,#5a5a5a);
}

.menubar > button{
    padding:0 13px 0 12px;
}

.doc-btns{
    display:flex;
    margin-left:auto;
    padding-right:2px;
}

.doc-btns button{
    width:16px;
}

.doc-btns svg{
    stroke:#2a2a2a;
}

/* file tabs */
.file-tabs{
    display:flex;
    align-items:flex-end;
    height:25px;
    padding-left:18px;
    background:#383838;
}

.file-tab{
    width:127px;
    height:21px;
    padding:0 14px;
    justify-content:flex-start;
    background:linear-gradient(#626262,#4f4f4f);
    color:#aaa;
    clip-path:polygon(8px 0,100% 0,calc(100% - 8px) 100%,0 100%);
}

.file-tab.active{
    width:128px;
    padding:0 18px 0 10px;
    justify-content:space-between;
    background:linear-gradient(#8e8e8e,#5c5c5c);
    color:#fff;
    clip-path:polygon(6px 0,calc(100% - 9px) 0,100% 100%,0 100%);
}

.file-tab svg{
    width:8px;
    height:8px;
    stroke:#444;
    stroke-width:2;
}

.file-tab.plus{
    width:23px;
    height:16px;
    margin:0 0 3px 1px;
    padding:0;
    justify-content:center;
    clip-path:polygon(0 0,16px 0,100% 100%,6px 100%);
}

.file-tab.plus svg{
    stroke:#ccc;
}

/* toolbars */
.toolstrip{
    display:flex;
    gap:1px;
    height:32px;
    padding:4px 0;
    background:#5b5b5b;
}

.toolbar{
    display:flex;
    align-items:stretch;
    border:1px solid #3a3a3a;
    border-width:1px 1px 1px 0;
    background:#555;
}

.toolbar button{
    width:23px;
}

.toolbar .drop{
    width:13px;
}

.toolbar .drop svg{
    opacity:.5;
}

.grip{
    width:4px;
    margin:4px 1px 4px 3px;
    background:repeating-conic-gradient(#222 0 25%,#777 0 50%) 0 0/2px 2px;
}

.sep{
    width:6px;
    border:solid #555;
    border-width:0 1px;
    background:#777;
    box-shadow:inset 2px 0 #3a3a3a;
}

.combo{
    display:flex;
    align-items:center;
    gap:4px;
    padding:0 4px 0 3px;
    background:#cdcdcd;
    color:#707070;
}

.combo select{
    flex:1;
    min-width:0;
    appearance:none;
}

.chev{
    width:8px;
    height:8px;
    stroke:#999;
}

.swatch{
    width:14px;
    height:14px;
    border:1px solid #000;
    background:#fff;
}

.rule{
    height:1px;
    background:#000;
}

.layer{
    width:301px;
    padding-left:6px;
}

.layer > svg:first-child{
    width:12px;
    height:16px;
}

.layer select{
    padding-left:1px;
}

.color{
    width:150px;
}

.ltype{
    width:165px;
    padding-left:5px;
}

.ltype .rule{
    width:60px;
}

.lweight{
    width:130px;
    padding-left:5px;
}

.lweight .rule{
    width:36px;
}

.pstyle{
    width:124px;
    padding-left:10px;
}

.wspace{
    width:175px;
    padding-left:9px;
}

/* side palettes */
.work{
    flex:1;
    display:flex;
    min-height:0;
}

.side{
    width:29px;
    padding-right:5px;
    display:flex;
    flex-direction:column;
    gap:2px;
}

.side.right{
    width:32px;
    padding:0 4px;
}

.palette{
    display:flex;
    flex-direction:column;
    align-items:center;
    background:#525252;
    box-shadow:inset 0 0 0 1px #3a3a3a;
}

.palette button{
    width:22px;
    height:22px;
}

.palette .grip{
    width:14px;
    height:4px;
    margin:3px 0 2px 4px;
    align-self:flex-start;
}

.palette .line{
    width:19px;
    height:2px;
    margin:1px 0 2px;
    background:#fff;
}

.palette .mtext{
    font-size:18px;
    line-height:22px;
}

.palette .abc{
    flex-direction:column;
    color:#86b9e0;
    font-size:7px;
    font-weight:bold;
    line-height:8px;
}

.abc svg{
    width:12px;
    height:9px;
    align-self:flex-end;
    margin-right:3px;
}

/* drawing area */
.canvas{
    position:relative;
    flex:1;
    min-width:0;
    background:#000;
    overflow:hidden;
}

.scene{
    display:block;
    width:100%;
    height:100%;
    stroke:#f2f2f2;
}

.scene text{
    font:300 18px "Open Sans",sans-serif;
    text-anchor:middle;
    fill:#fff;
    stroke:none;
}

.scene .dots{
    stroke:#aaa;
    stroke-dasharray:1 3;
}

.scene .dim{
    stroke:#aaa;
}

.tip{
    position:absolute;
    display:flex;
    align-items:center;
    padding:0 4px 1px;
    background:#9a9a9a;
    color:#111;
}

.angle{
    left:1199px;
    top:273px;
    width:29px;
    height:18px;
}

.prompt{
    left:1581px;
    top:403px;
    width:146px;
    height:21px;
    justify-content:space-between;
}

.prompt svg{
    width:10px;
    height:10px;
}

.length{
    position:absolute;
    left:1138px;
    top:297px;
    width:45px;
    height:18px;
    padding:1px 5px 2px 4px;
    display:flex;
    background:#fff;
}

.length input{
    width:100%;
    background:#1f6cb8;
    color:#fff;
}

.watermark{
    position:absolute;
    right:17px;
    bottom:12px;
    color:#bdbdbd;
    font:bold 40px/48px "Liberation Sans",sans-serif;
    -webkit-text-stroke:2px #bdbdbd;
}

.watermark span{
    position:relative;
}

/* slit through the capital A */
.watermark span::after{
    content:"";
    position:absolute;
    left:50%;
    top:6px;
    width:1px;
    height:22px;
    background:#222;
}

/* command line */
.command{
    position:absolute;
    left:378px;
    right:377px;
    bottom:0;
    display:flex;
    flex-direction:column;
    align-items:flex-start;
    font:12px "DejaVu Sans Mono",monospace;
}

.command p{
    margin:0 0 5px 62px;
    padding:0 2px;
    background:#4f4f4f;
    line-height:15px;
}

.command .old{
    background:#3c3c3c;
    color:#aaa;
}

.command .mid{
    background:#444;
    color:#ccc;
}

.cmd-bar{
    display:flex;
    align-items:stretch;
    width:100%;
    height:27px;
    margin-top:-3px;
    border:1px solid #888;
    border-width:1px 1px 2px 0;
    background:#fff;
    color:#111;
}

.cmd-tools{
    display:flex;
    width:56px;
    background:linear-gradient(#777,#444);
}

.cmd-tools svg{
    stroke:#f2f2f2;
    width:12px;
    height:12px;
}

.cmd-tools button{
    width:22px;
}

.cmd-tools button + button svg{
    width:14px;
    height:14px;
}

.cmd-tools .grip{
    width:5px;
    background:radial-gradient(#aaa 1px,transparent 1px) 0 0/3px 3px;
}

.recent{
    gap:2px;
    padding:0 6px 0 5px;
}

.recent svg{
    width:16px;
    height:13px;
}

.recent .small{
    width:6px;
    height:8px;
}

.cmd-text{
    display:flex;
    align-items:center;
    white-space:pre;
}

.cmd-text b{
    margin-right:-3px;
}

.cmd-text button{
    padding:0 1px;
    border-radius:3px;
    background:#cfcfcf;
}

.expand{
    margin-left:auto;
    width:14px;
}

.expand svg{
    width:8px;
    height:8px;
}

/* layout tabs and status */
.statusbar{
    display:flex;
    justify-content:space-between;
    height:26px;
    background:#393939;
}

.layout-tabs{
    display:flex;
    align-items:flex-start;
    padding-left:12px;
}

.layout-tabs button{
    width:65px;
    height:18px;
    background:#545454;
    color:#aaa;
    clip-path:polygon(0 0,100% 0,calc(100% - 7px) 100%,7px 100%);
}

.layout-tabs .active{
    width:58px;
    background:linear-gradient(#666,#999);
    color:#fff;
    font-weight:bold;
}

.layout-tabs .plus{
    width:28px;
    clip-path:polygon(4px 0,100% 0,calc(100% - 6px) 100%,0 100%);
}

.plus svg{
    width:8px;
    height:8px;
    stroke:#ccc;
    stroke-width:2;
}

.status{
    display:flex;
    padding:1px 1px 0 0;
    font-size:12px;
}

.group{
    display:flex;
    border:1px solid #777;
    border-width:1px 0 0 1px;
    background:#4e4e4e;
}

.group button{
    width:24px;
}

.group .drop{
    width:16px;
}

.group .model{
    width:50px;
}

.group .scale{
    width:36px;
    gap:3px;
    font-size:11px;
}

.group .on{
    background:#5a89bf;
}

.group:nth-last-child(-n+2){
    padding:0 1px;
}

/* video caption */
.caption{
    height:43px;
    padding-left:25px;
    background:#141414;
    color:#fff;
    font:bold 21px/43px "Liberation Sans",sans-serif;
}
```
